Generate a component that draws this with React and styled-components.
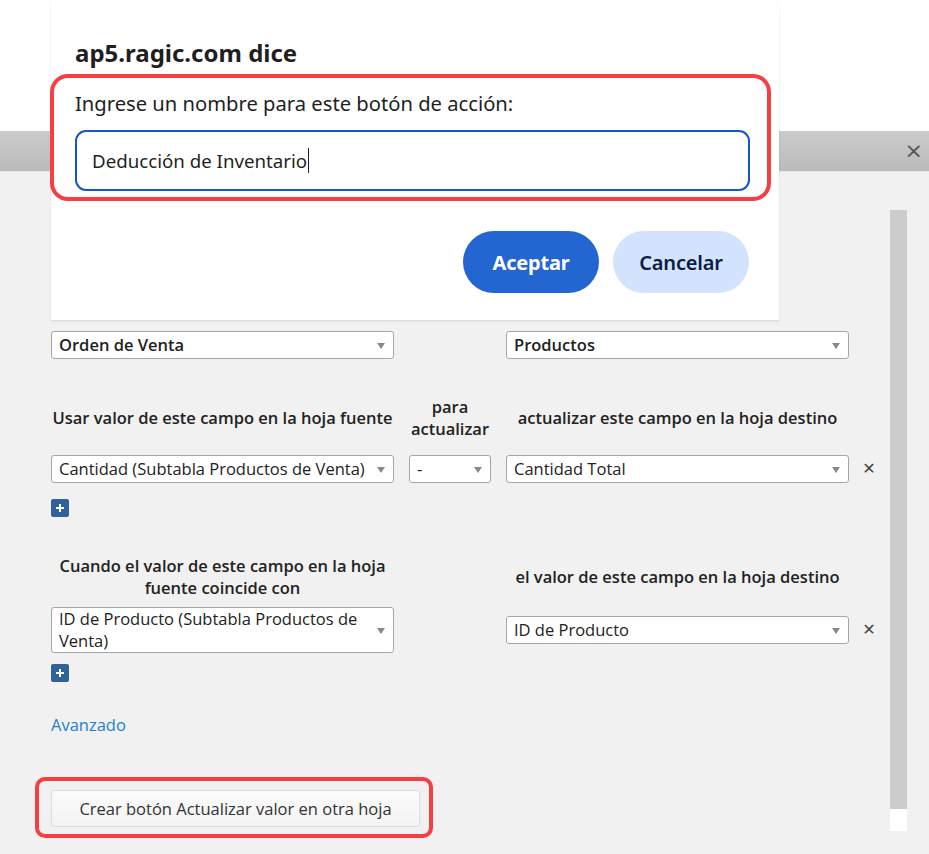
import React from "react";
import styled, { createGlobalStyle } from "styled-components";

const Global = createGlobalStyle`
  html, body { margin: 0; padding: 0; background: #ffffff; }
  body { font-family: "Open Sans", "Noto Sans", sans-serif; color: #222; }
  * { box-sizing: border-box; }
`;

const Page = styled.div`
  position: relative;
  width: 929px;
  height: 854px;
  overflow: hidden;
  background: #ffffff;
  padding-top: 131px;
`;

const Panel = styled.div`
  height: 723px;
  display: flex;
  flex-direction: column;
  background: #f1f1f1;
`;

const TitleBar = styled.div`
  height: 41px;
  flex: none;
  display: flex;
  justify-content: flex-end;
  align-items: center;
  padding-right: 6px;
  background: linear-gradient(#cbcbcb, #bababa);
  border-bottom: 1px solid #e6e6e6;
`;

const CloseX = styled.span`
  font-family: "DejaVu Sans", sans-serif;
  font-size: 22px;
  color: #555;
  line-height: 1;
`;

const Body = styled.div`
  flex: 1;
  display: flex;
`;

const Content = styled.div`
  flex: 1;
  padding: 124px 0 0 51px;
`;

const Grid = styled.div`
  display: grid;
  grid-template-columns: 343px 82px 343px 10px;
  column-gap: 15px;
  align-items: center;
`;

const HeadLabel = styled.div`
  font-size: 16.5px;
  font-weight: 600;
  line-height: 22px;
  color: #222;
  white-space: nowrap;
  text-align: ${(p) => p.$align || "center"};
  padding-left: ${(p) => p.$pl || 0}px;
`;

const Select = styled.div`
  position: relative;
  display: flex;
  align-items: center;
  min-height: 28px;
  padding: 0 26px 0 7px;
  background: #fff;
  border: 1px solid #a6a6a6;
  border-radius: 3px;
  font-size: 16.5px;
  line-height: 22px;
  font-weight: ${(p) => (p.$bold ? 600 : 400)};
  color: #222;
  &::after {
    content: "";
    position: absolute;
    right: 8px;
    top: 50%;
    margin-top: -2px;
    border-left: 4.5px solid transparent;
    border-right: 4.5px solid transparent;
    border-top: 6px solid #888;
  }
`;

const Remove = styled.span`
  font-family: "DejaVu Sans", sans-serif;
  font-size: 16px;
  color: #444;
  line-height: 1;
  justify-self: center;
`;

const PlusButton = styled.div`
  width: 18px;
  height: 18px;
  border-radius: 2px;
  background: #2f6298;
  display: flex;
  align-items: center;
  justify-content: center;
  margin-top: ${(p) => p.$mt}px;
`;

const Section = styled.div`
  margin-top: ${(p) => p.$mt}px;
`;

const AdvancedLink = styled.a`
  display: block;
  margin-top: 32px;
  font-size: 16.5px;
  color: #1e7fd0;
  text-decoration: none;
  line-height: 22px;
`;

const ButtonHighlight = styled.div`
  position: relative;
  margin-top: 54px;
  width: 369px;
`;

const CreateButton = styled.div`
  height: 37px;
  width: 369px;
  display: flex;
  align-items: center;
  justify-content: center;
  background: linear-gradient(#fbfbfb, #f3f3f3);
  border: 1px solid #dcdcdc;
  border-radius: 3px;
  font-size: 16.5px;
  color: #333;
`;

const Annotation = styled.div`
  position: absolute;
  border: 4px solid #f53f44;
  border-radius: ${(p) => p.$r}px;
  left: ${(p) => p.$l}px;
  top: ${(p) => p.$t}px;
  width: ${(p) => p.$w}px;
  height: ${(p) => p.$h}px;
  pointer-events: none;
`;

const ScrollTrack = styled.div`
  width: 17px;
  margin: 38px 22px 23px 0;
  display: flex;
  flex-direction: column;
`;

const ScrollThumb = styled.div`
  flex: 1;
  background: #cccccc;
`;

const ScrollEnd = styled.div`
  height: 22px;
  background: #ffffff;
`;

/* Browser prompt dialog */
const Dialog = styled.div`
  position: absolute;
  left: 51px;
  top: 0;
  width: 728px;
  height: 320px;
  background: #fff;
  border-radius: 0 8px 0 0;
  box-shadow: 0 1px 2px rgba(0, 0, 0, 0.12);
  padding: 37px 29px 0 24px;
  font-family: "Noto Sans", "Open Sans", sans-serif;
`;

const DialogTitle = styled.div`
  font-size: 24px;
  font-weight: 700;
  color: #1f1f1f;
  line-height: 32px;
`;

const DialogLabel = styled.div`
  margin-top: 20px;
  font-size: 20.2px;
  color: #1f1f1f;
  line-height: 28px;
`;

const PromptInput = styled.div`
  margin-top: 13px;
  height: 61px;
  border: 2px solid #1358c8;
  border-radius: 11px;
  display: flex;
  align-items: center;
  padding-left: 15px;
  font-size: 18.7px;
  color: #1f1f1f;
`;

const Caret = styled.span`
  display: inline-block;
  width: 1px;
  height: 25px;
  background: #1f1f1f;
  margin-left: 1px;
`;

const DialogActions = styled.div`
  margin-top: 40px;
  display: flex;
  justify-content: flex-end;
  gap: 14px;
  padding-right: 1px;
`;

const PillButton = styled.div`
  width: 136px;
  height: 62px;
  border-radius: 31px;
  display: flex;
  align-items: center;
  justify-content: center;
  font-size: 20px;
  font-weight: ${(p) => (p.$primary ? 700 : 600)};
  background: ${(p) => (p.$primary ? "#2366d1" : "#d3e3fd")};
  color: ${(p) => (p.$primary ? "#ffffff" : "#0a1d44")};
  letter-spacing: -0.2px;
`;

const Plus = () => (
  <svg width="10" height="10" viewBox="0 0 10 10">
    <path d="M5 1v8M1 5h8" stroke="#fff" strokeWidth="2" />
  </svg>
);

export default function App() {
  return (
    <>
      <Global />
      <Page>
        <Panel>
          <TitleBar>
            <CloseX>×</CloseX>
          </TitleBar>
          <Body>
            <Content>
              <Grid>
                <HeadLabel $align="left" $pl={2}>Hoja fuente</HeadLabel>
                <div />
                <HeadLabel $align="left" $pl={2}>Hoja destino</HeadLabel>
                <div />
              </Grid>
              <Section $mt={13}>
                <Grid>
                  <Select $bold>Orden de Venta</Select>
                  <div />
                  <Select $bold>Productos</Select>
                  <div />
                </Grid>
              </Section>
              <Section $mt={37}>
                <Grid>
                  <HeadLabel>Usar valor de este campo en la hoja fuente</HeadLabel>
                  <HeadLabel>
                    para
                    <br />
                    actualizar
                  </HeadLabel>
                  <HeadLabel>actualizar este campo en la hoja destino</HeadLabel>
                  <div />
                </Grid>
              </Section>
              <Section $mt={15}>
                <Grid>
                  <Select>Cantidad (Subtabla Productos de Venta)</Select>
                  <Select>-</Select>
                  <Select>Cantidad Total</Select>
                  <Remove>✕</Remove>
                </Grid>
              </Section>
              <PlusButton $mt={16}>
                <Plus />
              </PlusButton>
              <Section $mt={38}>
                <Grid>
                  <HeadLabel>
                    Cuando el valor de este campo en la hoja
                    <br />
                    fuente coincide con
                  </HeadLabel>
                  <div />
                  <HeadLabel>el valor de este campo en la hoja destino</HeadLabel>
                  <div />
                </Grid>
              </Section>
              <Section $mt={8}>
                <Grid>
                  <Select>
                    ID de Producto (Subtabla Productos de
                    <br />
                    Venta)
                  </Select>
                  <div />
                  <Select>ID de Producto</Select>
                  <Remove>✕</Remove>
                </Grid>
              </Section>
              <PlusButton $mt={11}>
                <Plus />
              </PlusButton>
              <AdvancedLink href="#">Avanzado</AdvancedLink>
              <ButtonHighlight>
                <CreateButton>Crear botón Actualizar valor en otra hoja</CreateButton>
                <Annotation $l={-16} $t={-13} $w={398} $h={61} $r={10} />
              </ButtonHighlight>
            </Content>
            <ScrollTrack>
              <ScrollThumb />
              <ScrollEnd />
            </ScrollTrack>
          </Body>
        </Panel>

        <Dialog>
          <DialogTitle>ap5.ragic.com dice</DialogTitle>
          <DialogLabel>Ingrese un nombre para este botón de acción:</DialogLabel>
          <PromptInput>
            Deducción de Inventario
            <Caret />
          </PromptInput>
          <DialogActions>
            <PillButton $primary>Aceptar</PillButton>
            <PillButton>Cancelar</PillButton>
          </DialogActions>
          <Annotation $l={-1} $t={74} $w={721} $h={127} $r={18} />
        </Dialog>
      </Page>
    </>
  );
}
